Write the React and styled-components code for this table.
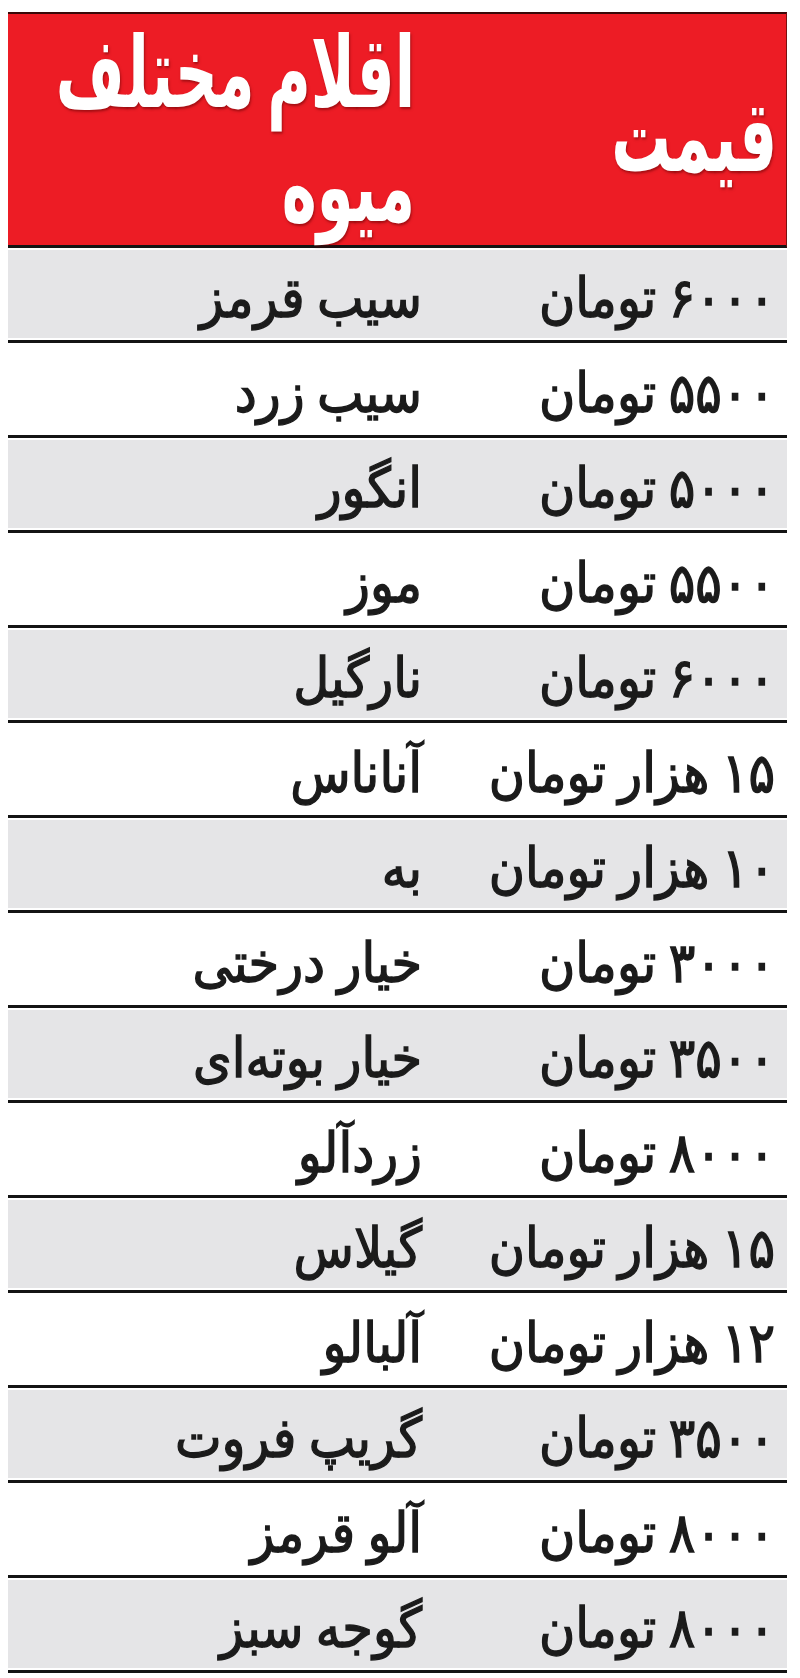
import styled, { createGlobalStyle } from "styled-components";

const prices = [
  ["۶۰۰۰ تومان", "سیب قرمز"],
  ["۵۵۰۰ تومان", "سیب زرد"],
  ["۵۰۰۰ تومان", "انگور"],
  ["۵۵۰۰ تومان", "موز"],
  ["۶۰۰۰ تومان", "نارگیل"],
  ["۱۵ هزار تومان", "آناناس"],
  ["۱۰ هزار تومان", "به"],
  ["۳۰۰۰ تومان", "خیار درختی"],
  ["۳۵۰۰ تومان", "خیار بوته‌ای"],
  ["۸۰۰۰ تومان", "زردآلو"],
  ["۱۵ هزار تومان", "گیلاس"],
  ["۱۲ هزار تومان", "آلبالو"],
  ["۳۵۰۰ تومان", "گریپ فروت"],
  ["۸۰۰۰ تومان", "آلو قرمز"],
  ["۸۰۰۰ تومان", "گوجه سبز"],
];

const GlobalStyle = createGlobalStyle`
  html, body {
    margin: 0;
    padding: 0;
    background: #fff;
  }
  body {
    font-family: "DejaVu Sans Condensed", "DejaVu Sans", sans-serif;
  }
`;

const App = () => {
  return (
    <Page>
      <GlobalStyle />
      <Table dir="rtl">
        <Header>
          <HeadCell>
            <HeadText $shift={16}>قیمت</HeadText>
          </HeadCell>
          <HeadCell>
            <HeadText $shift={2}>
              اقلام مختلف
              <br />
              میوه
            </HeadText>
          </HeadCell>
        </Header>
        {prices.map(([price, item], i) => (
          <Row key={item}>
            <Cells $shaded={i % 2 === 0}>
              <Cell>{price}</Cell>
              <Cell>{item}</Cell>
            </Cells>
          </Row>
        ))}
      </Table>
    </Page>
  );
};
export default App;

const Page = styled.div`
  width: 800px;
  height: 1678px;
  padding: 12px 13px 0 8px;
  box-sizing: border-box;
  overflow: hidden;
`;

const Table = styled.div`
  display: flex;
  flex-direction: column;
  width: 779px;
`;

const Header = styled.div`
  display: grid;
  grid-template-columns: 355px 1fr;
  height: 231px;
  background: #ed1c25;
  border-top: 2px solid #3a0808;
  border-right: 1px solid #7a1010;
  border-bottom: 3px solid #141414;
`;

const HeadCell = styled.div`
  display: flex;
  align-items: center;
  padding-right: 9px;
  &:last-child {
    padding-right: 16px;
  }
`;

const HeadText = styled.span`
  display: block;
  margin-top: ${(p) => p.$shift}px;
  color: #fff;
  font-size: 66px;
  font-weight: 700;
  line-height: 76px;
  word-spacing: -0.12em;
  text-shadow: 1px 1px 2px rgba(90, 0, 0, 0.5);
  transform: scaleY(1.5);
  transform-origin: right center;
`;

const Row = styled.div`
  padding: 2px 0;
  border-bottom: 3px solid #141414;
`;

const Cells = styled.div`
  display: grid;
  grid-template-columns: 355px 1fr;
  align-items: center;
  height: 88px;
  background: ${(p) => (p.$shaded ? "#e5e5e7" : "#fff")};
`;

const Cell = styled.div`
  padding: 8px 12px 0 0;
  color: #1b1b1b;
  font-size: 55px;
  font-weight: 400;
  line-height: 1;
  white-space: nowrap;
  word-spacing: -0.06em;
  -webkit-text-stroke: 1.3px #1b1b1b;
  &:last-child {
    padding-right: 10px;
  }
`;
